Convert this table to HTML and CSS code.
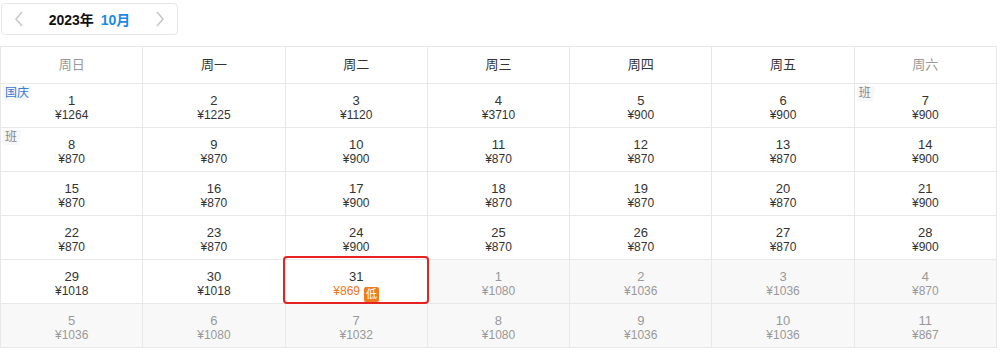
FILE: index.html
```html
<!DOCTYPE html>
<html lang="zh">
<head>
<meta charset="utf-8">
<link rel="stylesheet" href="styles.css">
</head>
<body>
<div class="nav">
  <span class="arrow left"><svg width="10" height="16" viewBox="0 0 10 16"><path d="M8 1 L2 8 L8 15" fill="none" stroke="#c8c8c8" stroke-width="1.6"/></svg></span>
  <span class="title"><b>2023年</b><b class="month">10月</b></span>
  <span class="arrow right"><svg width="10" height="16" viewBox="0 0 10 16"><path d="M2 1 L8 8 L2 15" fill="none" stroke="#c8c8c8" stroke-width="1.6"/></svg></span>
</div>
<table class="cal">
  <thead>
    <tr><th class="we">周日</th><th>周一</th><th>周二</th><th>周三</th><th>周四</th><th>周五</th><th class="we">周六</th></tr>
  </thead>
  <tbody>
    <tr>
      <td><span class="tag hol">国庆</span><div class="d">1</div><div class="p">¥1264</div></td>
      <td><div class="d">2</div><div class="p">¥1225</div></td>
      <td><div class="d">3</div><div class="p">¥1120</div></td>
      <td><div class="d">4</div><div class="p">¥3710</div></td>
      <td><div class="d">5</div><div class="p">¥900</div></td>
      <td><div class="d">6</div><div class="p">¥900</div></td>
      <td><span class="tag work">班</span><div class="d">7</div><div class="p">¥900</div></td>
    </tr>
    <tr>
      <td><span class="tag work">班</span><div class="d">8</div><div class="p">¥870</div></td>
      <td><div class="d">9</div><div class="p">¥870</div></td>
      <td><div class="d">10</div><div class="p">¥900</div></td>
      <td><div class="d">11</div><div class="p">¥870</div></td>
      <td><div class="d">12</div><div class="p">¥870</div></td>
      <td><div class="d">13</div><div class="p">¥870</div></td>
      <td><div class="d">14</div><div class="p">¥900</div></td>
    </tr>
    <tr>
      <td><div class="d">15</div><div class="p">¥870</div></td>
      <td><div class="d">16</div><div class="p">¥870</div></td>
      <td><div class="d">17</div><div class="p">¥900</div></td>
      <td><div class="d">18</div><div class="p">¥870</div></td>
      <td><div class="d">19</div><div class="p">¥870</div></td>
      <td><div class="d">20</div><div class="p">¥870</div></td>
      <td><div class="d">21</div><div class="p">¥900</div></td>
    </tr>
    <tr>
      <td><div class="d">22</div><div class="p">¥870</div></td>
      <td><div class="d">23</div><div class="p">¥870</div></td>
      <td><div class="d">24</div><div class="p">¥900</div></td>
      <td><div class="d">25</div><div class="p">¥870</div></td>
      <td><div class="d">26</div><div class="p">¥870</div></td>
      <td><div class="d">27</div><div class="p">¥870</div></td>
      <td><div class="d">28</div><div class="p">¥900</div></td>
    </tr>
    <tr>
      <td><div class="d">29</div><div class="p">¥1018</div></td>
      <td><div class="d">30</div><div class="p">¥1018</div></td>
      <td class="sel"><div class="d">31</div><div class="p low">¥869<span class="badge">低</span></div></td>
      <td class="off"><div class="d">1</div><div class="p">¥1080</div></td>
      <td class="off"><div class="d">2</div><div class="p">¥1036</div></td>
      <td class="off"><div class="d">3</div><div class="p">¥1036</div></td>
      <td class="off"><div class="d">4</div><div class="p">¥870</div></td>
    </tr>
    <tr>
      <td class="off"><div class="d">5</div><div class="p">¥1036</div></td>
      <td class="off"><div class="d">6</div><div class="p">¥1080</div></td>
      <td class="off"><div class="d">7</div><div class="p">¥1032</div></td>
      <td class="off"><div class="d">8</div><div class="p">¥1080</div></td>
      <td class="off"><div class="d">9</div><div class="p">¥1036</div></td>
      <td class="off"><div class="d">10</div><div class="p">¥1036</div></td>
      <td class="off"><div class="d">11</div><div class="p">¥867</div></td>
    </tr>
  </tbody>
</table>
</body>
</html>
```
FILE: styles.css
```css
* { box-sizing: border-box; }
body {
  margin: 0;
  background: #fff;
  font-family: "Liberation Sans", "Noto Sans CJK SC", Arial, sans-serif;
  color: #333;
}
.nav {
  margin: 3px 0 0 1px;
  width: 177px;
  height: 32px;
  border: 1px solid #e6e6e6;
  border-radius: 4px;
  display: flex;
  align-items: center;
  justify-content: space-between;
  padding: 0 12px 0 12px;
}
.arrow { display: flex; align-items: center; }
.title { display: flex; gap: 7px; font-size: 14px; color: #111; }
.title b { font-weight: bold; }
.title .month { color: #1e88e5; }
.cal {
  margin-top: 11px;
  width: 997px;
  border-collapse: collapse;
  table-layout: fixed;
}
.cal th, .cal td {
  border: 1px solid #e8e8e8;
  text-align: center;
  padding: 0;
}
.cal th {
  height: 37px;
  font-size: 13px;
  font-weight: normal;
  color: #333;
  padding-bottom: 3px;
}
.cal th.we { color: #999; }
.cal td {
  height: 44px;
  position: relative;
  vertical-align: top;
  padding-top: 9px;
}
.d { font-size: 13px; line-height: 15px; color: #333; }
.p { font-size: 12px; line-height: 15px; color: #333; margin-top: 0px; }
.off { background: #f8f8f8; }
.off .d, .off .p { color: #999; }
.tag {
  position: absolute;
  top: 2px;
  left: 2px;
  font-size: 12px;
  line-height: 15px;
  padding: 0 7px 0 2px;
  background: linear-gradient(100deg, #f6f7f9 78%, transparent 79%);
}
.tag.hol { color: #3a7bd5; }
.tag.work { color: #888; }
.sel { z-index: 2; }
.sel::after {
  content: "";
  position: absolute;
  top: -4px;
  left: -3px;
  right: -2px;
  bottom: -1px;
  border: 2px solid #e62222;
  border-radius: 4px;
  z-index: 2;
}
.low { color: #f27322; }
.badge {
  display: inline-block;
  margin-left: 4px;
  width: 15px;
  height: 15px;
  line-height: 15px;
  font-size: 11px;
  background: #ee7d1e;
  color: #fff;
  border-radius: 2px;
  vertical-align: -3px;
}
```
